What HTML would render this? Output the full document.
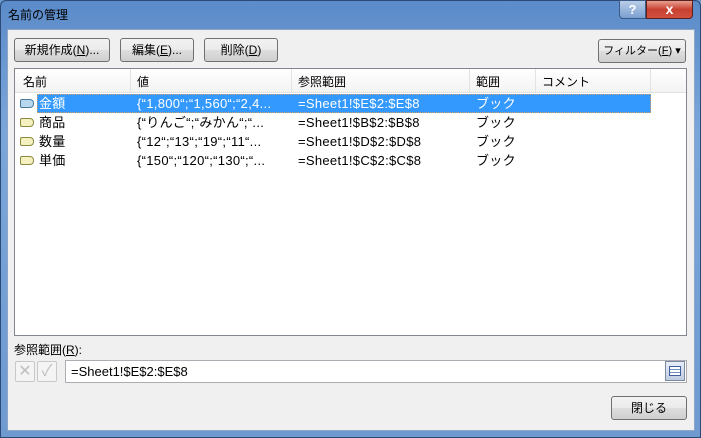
<!DOCTYPE html>
<html><head><meta charset="utf-8"><style>
*{margin:0;padding:0;box-sizing:border-box}
body{width:701px;height:438px;overflow:hidden;background:#6d98cf;font-family:"Liberation Sans","Noto Sans CJK JP",sans-serif;font-size:12px;color:#000;position:relative}
.frame{position:absolute;left:0;top:0;width:701px;height:438px;background:linear-gradient(180deg,#5b8bc9 0%,#7aa6da 30%,#6f9ad0 100%);border:1px solid #2b4a78;border-radius:6px 6px 0 0}
.title{position:absolute;left:8px;top:6px;font-size:12px;color:#000}
.client{position:absolute;left:7px;top:29px;width:688px;height:402px;background:#f0f0f0;border:1px solid #8ea6c6}
.btn{position:absolute;height:24px;border:1px solid #707070;border-radius:3px;background:linear-gradient(#f2f2f2 0%,#ebebeb 48%,#dddddd 52%,#cfcfcf 100%);text-align:center;line-height:22px;font-size:12px}
.list{position:absolute;left:14px;top:68px;width:673px;height:268px;background:#fff;border:1px solid #828790}
.hdr{position:absolute;left:0;top:0;width:671px;height:24px;background:linear-gradient(#fff,#f3f3f3);border-bottom:1px solid #e2e2e2}
.hdr span{position:absolute;top:4px}
.sep{position:absolute;top:0;width:1px;height:24px;background:#e3e3e3}
.row{position:absolute;left:0;height:19px;width:671px;font-size:13px;line-height:19px;letter-spacing:0.3px}
.row span{position:absolute;top:0;white-space:nowrap}
.sel{position:absolute;left:22px;top:0;width:614px;height:19px;background:#3399ff;border:1px dotted #d8a060}
.ic{position:absolute;left:5px;top:5px;width:14px;height:9px;border:1px solid #8a8a40;border-radius:2px 4px 4px 2px;background:#f4f0c0}
.tb{position:absolute;width:20px;height:21px;border:1px solid #c8c8c8;border-radius:2px;background:#f4f4f4;color:#c0c0c0;text-align:center;line-height:19px;font-size:16px}
</style></head><body>
<div class="frame"></div>
<div class="title">名前の管理</div>
<div style="position:absolute;left:619px;top:0;width:27px;height:19px;border:1px solid #3a5a88;border-radius:0 0 0 4px;background:linear-gradient(#b9cde8,#7b9fd0);color:#fff;text-align:center;font-weight:bold;line-height:17px;font-size:13px">?</div>
<div style="position:absolute;left:646px;top:0;width:47px;height:19px;border:1px solid #5a2020;border-radius:0 0 4px 0;background:linear-gradient(#e8a090,#c84030 50%,#d05040);color:#fff;text-align:center;font-weight:bold;line-height:17px;font-size:14px">x</div>
<div class="client"></div>
<div class="btn" style="left:14px;top:38px;width:96px">新規作成(<u>N</u>)...</div>
<div class="btn" style="left:120px;top:38px;width:74px">編集(<u>E</u>)...</div>
<div class="btn" style="left:204px;top:38px;width:74px">削除(<u>D</u>)</div>
<div class="btn" style="left:598px;top:39px;width:88px;font-size:11px">フィルター(<u>F</u>) ▾</div>
<div class="list">
<div class="hdr">
<span style="left:8px">名前</span><div class="sep" style="left:115px"></div>
<span style="left:122px">値</span><div class="sep" style="left:276px"></div>
<span style="left:283px">参照範囲</span><div class="sep" style="left:454px"></div>
<span style="left:461px">範囲</span><div class="sep" style="left:520px"></div>
<span style="left:527px">コメント</span><div class="sep" style="left:635px"></div>
</div>
<div class="row" style="top:25px;color:#fff"><div class="sel"></div><div class="ic" style="border-color:#4a7a9a;background:#b8d8f0"></div><span style="left:24px">金額</span><span style="left:122px">{“1,800“;“1,560“;“2,4...</span><span style="left:283px">=Sheet1!$E$2:$E$8</span><span style="left:461px">ブック</span></div>
<div class="row" style="top:44px"><div class="ic"></div><span style="left:24px">商品</span><span style="left:122px">{“りんご“;“みかん“;“...</span><span style="left:283px">=Sheet1!$B$2:$B$8</span><span style="left:461px">ブック</span></div>
<div class="row" style="top:63px"><div class="ic"></div><span style="left:24px">数量</span><span style="left:122px">{“12“;“13“;“19“;“11“...</span><span style="left:283px">=Sheet1!$D$2:$D$8</span><span style="left:461px">ブック</span></div>
<div class="row" style="top:82px"><div class="ic"></div><span style="left:24px">単価</span><span style="left:122px">{“150“;“120“;“130“;“...</span><span style="left:283px">=Sheet1!$C$2:$C$8</span><span style="left:461px">ブック</span></div>
</div>
<div style="position:absolute;left:14px;top:341px">参照範囲(<u>R</u>):</div>
<div class="tb" style="left:15px;top:361px">✕</div>
<div class="tb" style="left:37px;top:361px">✓</div>
<div style="position:absolute;left:65px;top:360px;width:622px;height:23px;background:#fff;border:1px solid #abadb3;font-size:13px;line-height:21px;padding-left:5px">=Sheet1!$E$2:$E$8</div>
<div style="position:absolute;left:665px;top:361px;width:20px;height:20px;border:1px solid #7a8aa0;background:linear-gradient(#e8eef8,#c0cce0)"><div style="margin:4px 3px;width:12px;height:10px;border:1px solid #4060a0;background:repeating-linear-gradient(#fff 0 2px,#7090c0 2px 3px)"></div></div>
<div class="btn" style="left:611px;top:396px;width:76px">閉じる</div>
</body></html>
